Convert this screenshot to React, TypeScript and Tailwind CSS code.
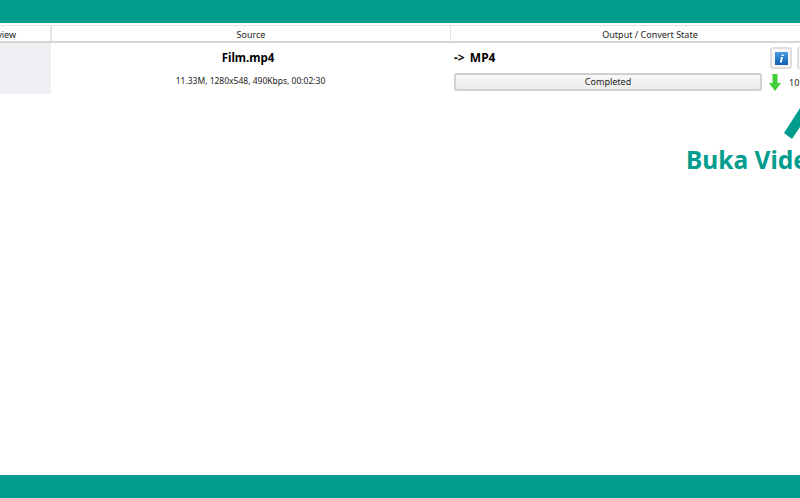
const FONT = "font-['Noto_Sans','Open_Sans',sans-serif]";

function InfoIcon() {
  return (
    <svg width="13" height="13" viewBox="0 0 13 13">
      <defs>
        <linearGradient id="infoBlue" x1="0" y1="0" x2="0" y2="1">
          <stop offset="0" stopColor="#4a9be0" />
          <stop offset="1" stopColor="#0f5fb5" />
        </linearGradient>
      </defs>
      <rect width="13" height="13" fill="url(#infoBlue)" />
      <path d="M6.9 2.4h2l-.4 1.7h-2zM6 5h2L6.8 10.6h-2z" fill="#fff" />
    </svg>
  );
}

function DownArrow() {
  return (
    <svg width="12" height="17" viewBox="0 0 12 17" className="block">
      <path d="M3.5 0h5v9H12l-6 8-6-8h3.5z" fill="#3fce35" />
    </svg>
  );
}

export default function App() {
  return (
    <div className={`relative flex h-[498px] w-[800px] flex-col overflow-hidden bg-white ${FONT}`}>
      <div className="h-[23px] shrink-0 bg-[#009d8e]" />

      {/* table header */}
      <div className="mt-[2px] flex h-[18px] shrink-0 border-t border-b-2 border-t-[#e3e3e3] border-b-[#d6d6d6] text-[9px] text-[#222]">
        <div className="flex w-[52px] shrink-0 items-center justify-end overflow-hidden border-r-2 border-[#e6e6e6] pt-[2px] pr-[34px]">
          <span className="leading-none">view</span>
        </div>
        <div className="flex w-[399px] shrink-0 items-center justify-center border-r border-[#e3e3e3] pt-[2px]">
          Source
        </div>
        <div className="flex w-[398px] shrink-0 items-center justify-center pt-[2px]">Output / Convert State</div>
      </div>

      {/* file row */}
      <div className="flex h-[51px] shrink-0">
        <div className="w-[51px] shrink-0 bg-[#eff0f3]" />
        <div className="flex w-[399px] shrink-0 flex-col items-center pt-[6px]">
          <span className="mr-[5px] text-[11.5px] leading-[17px] font-bold text-black">Film.mp4</span>
          <span className="mt-[9px] text-[8.5px] leading-[12px] text-[#222]">11.33M, 1280x548, 490Kbps, 00:02:30</span>
        </div>
        <div className="flex min-w-0 flex-1 flex-col pt-[4px] pl-[4px]">
          <div className="flex h-[22px] items-center justify-between">
            <span className="text-[12px] font-bold text-black [word-spacing:2px]">-&gt; MP4</span>
            <div className="-mr-[20px] flex gap-[5px]">
              <button className="flex h-[22px] w-[22px] items-center justify-center rounded-[3px] border-2 border-[#dedede] bg-[#f7f7f7]">
                <InfoIcon />
              </button>
              <button className="h-[22px] w-[23px] rounded-[3px] border-2 border-[#dedede] bg-[#f7f7f7]" />
            </div>
          </div>
          <div className="mt-[4px] flex h-[18px] items-center">
            <div className="flex h-[18px] w-[308px] shrink-0 items-center justify-center rounded-[3px] border-2 border-[#cfcfcf] bg-gradient-to-b from-[#f8f8f8] to-[#ececec] text-[9px] text-[#222]">
              Completed
            </div>
            <span className="ml-[7px] shrink-0"><DownArrow /></span>
            <span className="mt-[1px] ml-[8px] text-[9px] text-[#222]">10.</span>
          </div>
        </div>
      </div>

      <div className="flex-1" />
      <div className="h-[23px] shrink-0 bg-[#009d8e]" />

      {/* callout */}
      <svg className="absolute top-[100px] left-[780px]" width="20" height="40" viewBox="0 0 20 40">
        <path d="M4 33 20 8V27L12 39z" fill="#009d8e" />
      </svg>
      <span className="absolute top-[143px] left-[686px] text-[24.5px] leading-[34px] font-bold whitespace-nowrap text-[#009d8e]">
        Buka Video
      </span>
    </div>
  );
}
